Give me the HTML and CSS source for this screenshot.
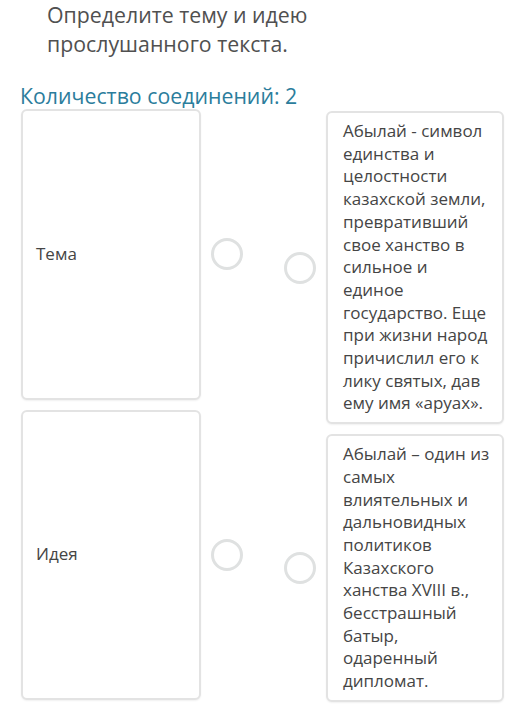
FILE: index.html
```html
<!DOCTYPE html>
<html lang="ru">
<head>
  <meta charset="UTF-8">
  <meta name="viewport" content="width=device-width, initial-scale=1.0">
  <title>Соединения</title>
  <link rel="stylesheet" href="styles.css">
</head>
<body>
  <div class="question">
    <p class="prompt">Определите тему и идею прослушанного текста.</p>
  </div>

  <h2 class="count">Количество соединений: 2</h2>

  <div class="match">
    <div class="column left">
      <div class="item">
        <div class="card">Тема</div>
        <span class="dot"></span>
      </div>
      <div class="item">
        <div class="card">Идея</div>
        <span class="dot"></span>
      </div>
    </div>

    <div class="column right">
      <div class="item">
        <span class="dot"></span>
        <div class="card">Абылай - символ единства и целостности казахской земли, превративший свое ханство в сильное и единое государство. Еще при жизни народ причислил его к лику святых, дав ему имя «аруах».</div>
      </div>
      <div class="item">
        <span class="dot"></span>
        <div class="card">Абылай – один из самых влиятельных и дальновидных политиков Казахского ханства XVIII в., бесстрашный батыр, одаренный дипломат.</div>
      </div>
    </div>
  </div>
</body>
</html>
```

FILE: styles.css
```css
* {
  margin: 0;
  padding: 0;
  box-sizing: border-box;
}

body {
  font-family: 'Open Sans', 'Noto Sans', sans-serif;
  background-color: #fff;
  color: #444;
  width: 514px;
  height: 726px;
  overflow: hidden;
}

.question {
  padding: 0 20px 0 47px;
}

.prompt {
  font-size: 21.3px;
  line-height: 29px;
  color: #505050;
  width: 300px;
}

.count {
  font-size: 21.3px;
  font-weight: normal;
  line-height: 30px;
  color: #2b7d9c;
  margin: 23px 0 0 20px;
}

.match {
  display: flex;
  justify-content: space-between;
  padding: 0 10px 0 21px;
  margin-top: -2px;
}

.column {
  display: flex;
  flex-direction: column;
  gap: 10px;
}

.left {
  width: 222px;
  height: 591px;
}

.left .item {
  flex: 1;
}

.right {
  width: 220px;
  padding-top: 2px;
}

.item {
  display: flex;
  align-items: center;
  gap: 10px;
}

.card {
  border: 2px solid #e3e3e3;
  border-radius: 6px;
  background: #fff;
  box-shadow: 0 1px 2px rgba(0, 0, 0, 0.06);
  font-size: 17px;
  line-height: 22.7px;
  color: #454545;
}

.left .card {
  width: 180px;
  height: 100%;
  display: flex;
  align-items: center;
  padding: 0 13px;
}

.right .card {
  width: 180px;
  padding: 7px 12px 7px 15px;
}

.dot {
  flex: none;
  width: 32px;
  height: 32px;
  border: 3px solid #dfe1e1;
  border-radius: 50%;
}
```
